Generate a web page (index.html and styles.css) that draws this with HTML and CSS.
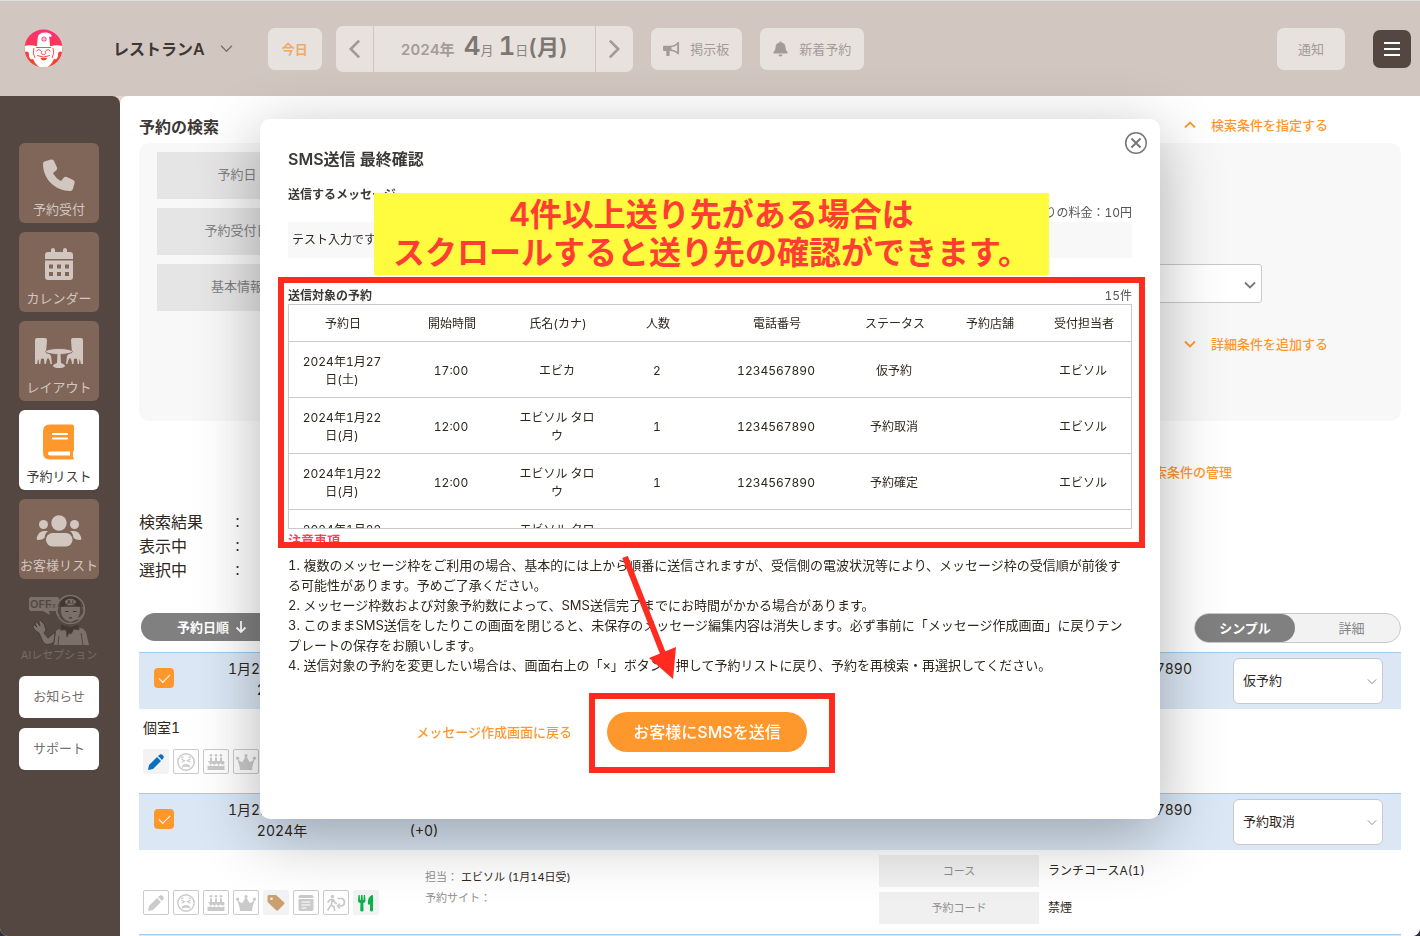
FILE: index.html
```html
<!DOCTYPE html>
<html lang="ja">
<head>
<meta charset="utf-8">
<meta name="viewport" content="width=device-width, initial-scale=1">
<title>予約リスト</title>
<link rel="stylesheet" href="styles.css">
</head>
<body>
<svg class="sprite" aria-hidden="true">
  <symbol id="chev" viewBox="0 0 12 8"><path d="M1 1.5l5 5 5-5" fill="none" stroke="currentColor" stroke-width="1.8"/></symbol>
  <symbol id="chev-thin" viewBox="0 0 12 8"><path d="M1 1.5l5 5 5-5" fill="none" stroke="currentColor" stroke-width="1.2"/></symbol>
  <symbol id="pencil" viewBox="0 0 18 18"><path d="M1 17l1-5L10 4l4 4-8 8zM11 3l2-1.500c1.600-1.300 4.700 1.600 3.500 3.400L15 7z" fill="currentColor"/></symbol>
  <symbol id="face" viewBox="0 0 18 18"><g fill="none" stroke="currentColor" stroke-width="1.400"><circle cx="9" cy="9" r="8.200"/><path d="M4.500 6l3 1.700-3 1.500M13.500 6l-3 1.700 3 1.500M5.500 13.800c.7-3 6.300-3 7 0l-1.700-.7H7.200zM4 4.800l2.500-1M14 4.800l-2.500-1" stroke-width="1.200"/></g></symbol>
  <symbol id="cake" viewBox="0 0 18 18"><path d="M3 4.500h2V8h3V4.500h2V8h3V4.500h2V8h1c1 0 1.500.7 1.500 1.500v1c-1.300 1.500-2.600 1.500-3.900 0-1.400 1.500-2.800 1.500-4.100 0-1.400 1.500-2.800 1.500-4.100 0-1 1.300-2 1.500-2.900.5V9.500C.5 8.500 1 8 2 8h1zM.500 12.500c1 .7 2 .5 2.900-.3 1.300 1.200 2.700 1.200 4.100 0 1.300 1.200 2.700 1.200 4.100 0 1.500 1.300 3.500 1.400 5.900 0V17H.500z" fill="currentColor"/><circle cx="4" cy="2.200" r="1.300" fill="currentColor"/><circle cx="9" cy="2.200" r="1.300" fill="currentColor"/><circle cx="14" cy="2.200" r="1.300" fill="currentColor"/></symbol>
  <symbol id="crown" viewBox="0 0 20 18"><path d="M3.800 14.500L1.300 5.500q3 3.500 5.200 3.500L10 2.500 13.500 9q2.200 0 5.200-3.500l-2.500 9v2.500H3.800z" fill="currentColor"/><circle cx="10" cy="2.600" r="1.600" fill="currentColor"/><circle cx="1.600" cy="5.200" r="1.600" fill="currentColor"/><circle cx="18.400" cy="5.200" r="1.600" fill="currentColor"/></symbol>
  <symbol id="tag" viewBox="0 0 18 18"><path d="M.5 2.500Q.5 1 2 1h7l8 7.300q1 1 0 2l-5.800 6q-1 .9-2 0L.5 8z" fill="currentColor"/><circle cx="4.500" cy="4.800" r="1.300" fill="#f3f3f3"/></symbol>
  <symbol id="note" viewBox="0 0 18 18"><rect x="1.500" y="1" width="15" height="16" rx="2" fill="currentColor"/><path d="M1 4.500h16M4.500 8h9M4.500 11h9M4.500 14h5" stroke="#fff" stroke-width="1.200"/></symbol>
  <symbol id="leave" viewBox="0 0 20 18"><circle cx="6.500" cy="2.500" r="1.700" fill="currentColor"/><path d="M1.500 8.500L4.500 5.500l3 .3 1.500 3 2 .8M6.500 6l-1.300 5 3 2 .4 4M4.700 11.500L1.500 16.500M11.500 4.500h4.500c3.500 1.500 3.300 7-1 7.500h-3M14 9.500L11.500 12l2.500 2.500" fill="none" stroke="currentColor" stroke-width="1.700"/></symbol>
  <symbol id="meal" viewBox="0 0 18 18"><path d="M1.500 1h1.200l.4 5h.6L4 1h1.500l.3 5h.6L6.800 1H8l.5 5.500c0 1.500-1 2.300-2.200 2.600L6.600 16q0 1.500-1.700 1.500T3.200 16l.3-6.900C2 8.700 1 7.800 1 6.500zM16 1v15q0 1.500-1.500 1.500T13 16v-5.500h-2C10.500 5.500 12 1.500 16 1z" fill="currentColor"/></symbol>
</svg>

<div class="app">
  <header class="topbar">
    <svg class="logo" viewBox="0 0 39 39" role="img" aria-label="ロゴ">
      <defs><linearGradient id="lg" x1="0" y1="0" x2="0" y2="1"><stop offset="0" stop-color="#ff2d78"/><stop offset="1" stop-color="#f04a22"/></linearGradient><clipPath id="lc"><circle cx="19.500" cy="19.500" r="19"/></clipPath></defs>
      <g clip-path="url(#lc)">
        <rect width="39" height="39" fill="url(#lg)"/>
        <path d="M13 17l.8-9Q15 3.500 21 3.500c5 0 8 2.500 6 4.500l-1.800-.5.8 9.500z" fill="#fff"/>
        <path d="M0 17q6-1.500 12 0h15q6-1.500 12 0l-1 6q-4-2-4 3t-4 4q-4 9-10.500 9T9 30q-4 1-4-4T1 23z" fill="#fff"/>
        <circle cx="20" cy="10" r="2.600" fill="#f45b86"/><path d="M18 10h4M20 8v4" stroke="#fff" stroke-width=".7"/>
        <path d="M12.500 22q2-2.500 4.500-.5M22 21.500q2.500-2 4.500.5M12 18.500h15M18 22q-2 3.500 1.500 3.500T21 22M13 26.500q6.500 3 13 0M10 19q-2 5 1 10M29 19q2 5-1 10" fill="none" stroke="#f23d35" stroke-width=".9"/>
        <path d="M16.500 28.800h6.500q-.5 2.700-3.200 2.700t-3.300-2.700z" fill="#f0482b"/>
      </g>
    </svg>
    <button class="shop" type="button">レストランA<svg class="shop-chev"><use href="#chev-thin"/></svg></button>
    <button class="hbtn today" type="button">今日</button>
    <div class="datenav">
      <button class="step" type="button" aria-label="前の日"><svg viewBox="0 0 14 22"><path d="M12 2L3 11l9 9" fill="none" stroke="currentColor" stroke-width="2.800"/></svg></button>
      <button class="date" type="button"><span class="year">2024年</span><span class="big">4</span><span class="unit">月</span><span class="big day">1</span><span class="unit">日</span><span class="wday">(月)</span></button>
      <button class="step" type="button" aria-label="次の日"><svg viewBox="0 0 14 22"><path d="M2 2l9 9-9 9" fill="none" stroke="currentColor" stroke-width="2.800"/></svg></button>
    </div>
    <button class="hbtn board" type="button"><svg viewBox="0 0 18 16"><path d="M1 4.500h6.500C11 4.500 14 3 15.500.5H17v13h-1.500C14 11.500 11 10 7.500 10H7v4.500q0 1-1 1H4.500q-1 0-1-1V10H1q-1 0-1-1V5.500q0-1 1-1z" fill="currentColor"/><path d="M9 6q3.500 0 6-2.500v7.500Q12.500 8.700 9 8.500z" fill="#e8e2de"/></svg>掲示板</button>
    <button class="hbtn fresh" type="button"><svg viewBox="0 0 16 16"><path d="M7 1.500V.5h2v1c3 .5 4 2.500 4 5q0 3 2 4.500v1.500H1V11q2-1.500 2-4.500c0-2.500 1-4.500 4-5zM6 13.500h4q0 2-2 2t-2-2z" fill="currentColor"/></svg>新着予約</button>
    <button class="hbtn notice" type="button">通知</button>
    <button class="menu" type="button" aria-label="メニュー"><span></span><span></span><span></span></button>
  </header>

  <nav class="side">
    <a class="nav" href="#"><svg viewBox="0 0 36 36"><path d="M3.500 4.500l6.500-2q2-.5 3 1.500l3 6.500q.6 1.700-.8 3L12 16q2.500 5 8 8l2.700-3.300q1.200-1.300 3-.7l6.500 2.900q2 1 1.400 3l-1.800 6.300q-.5 1.800-2.400 1.800C14 34 2 22 2 6.800q0-1.800 1.500-2.300z" fill="currentColor"/></svg>予約受付</a>
    <a class="nav" href="#"><svg viewBox="0 0 36 36"><path d="M4 13V9q0-3 3-3h3V4a2 2 0 014 0V6h8V4a2 2 0 014 0V6h3q3 0 3 3v4zM4 14.500h28V31q0 3-3 3H7q-3 0-3-3z" fill="currentColor"/><path d="M8 20.500h20M8 28h20" stroke="#806658" stroke-width="4" stroke-dasharray="4 4"/></svg>カレンダー</a>
    <a class="nav" href="#"><svg class="wide" viewBox="0 0 48 36"><path id="chair" d="M0 5q0-2 2-2h8q2 0 2 2l-1 13q4 .5 5 3l1 8h-1.500q-.8-5-2.500-6-1.500 1-2 6H9.500L9 24q-2-1-3 0l-.7 5H4l-.5-5q-1 1-1.300 5H0z" fill="currentColor"/><use href="#chair" transform="matrix(-1 0 0 1 48 0)"/><ellipse cx="24" cy="16.500" rx="13.500" ry="3" fill="currentColor" stroke="#806658" stroke-width=".8"/><path d="M22.500 19h3l.5 9q4 1.500 4 3-1 2-6 2t-6-2q0-1.500 4-3z" fill="currentColor"/></svg>レイアウト</a>
    <a class="nav active" href="#"><svg viewBox="0 0 36 36"><path d="M8.500.5H31q2 0 2 2v23.500q0 1-1 2v5q1 .5 1 1.500t-1 1H9q-7 0-7-7v-21q0-7 6.500-7z" fill="currentColor"/><path d="M12 10h14M12 14.500h14" stroke="#fff" stroke-width="2.200" stroke-linecap="round"/><path d="M9 27.500h20V31.500H9q-2 0-2-2t2-2z" fill="#fff"/></svg>予約リスト</a>
    <a class="nav" href="#"><svg class="wide" viewBox="0 0 48 36"><g fill="currentColor"><circle cx="24" cy="10" r="7.700"/><circle cx="8.500" cy="11.500" r="4.500"/><circle cx="39.500" cy="11.500" r="4.500"/><rect x="11" y="20" width="26.500" height="13.500" rx="6.500"/><path d="M13 18q-3 2-3.500 7-2 2-6.500 2-2 0-1-3 2-6 7-6zM35 18q3 2 3.500 7 2 2 6.500 2 2 0 1-3-2-6-7-6z"/></g></svg>お客様リスト</a>
    <a class="nav ai" href="#"><svg viewBox="0 0 64 52"><path d="M4 4h26q2 0 2 2v10q0 2-2 2h-8l1 4-7-4H4q-2 0-2-2V6q0-2 2-2z" fill="#7b706a"/><text x="3" y="15" class="off">OFF</text><text x="21" y="15" class="off small">です</text><circle cx="43.500" cy="16.500" r="14" fill="#544741" stroke="#7b706a" stroke-width="1.400"/><path d="M34 14h19q1 13-9.500 15Q33 27 34 14z" fill="#7b706a"/><path d="M33 14q0-10 10.500-10.500Q54 4 54 14q-10-4-21 0z" fill="#43382f"/><ellipse cx="43.500" cy="9" rx="5.500" ry="3.300" fill="#7b706a"/><text x="40" y="11" class="aitxt">A.I.</text><path d="M31 14q-3 5 1 9M56 14q3 5-1 9-2 3-7 3" fill="none" stroke="#7b706a" stroke-width="1.600"/><path d="M38 18.500h3.500M46 18.500h3.500M42 24.500q1.500 1 3 0" fill="none" stroke="#43382f" stroke-width="1.100"/><path d="M27 52l2-14q3-3 9-4h12q7 1 9 5l3 13z" fill="#7b706a"/><path d="M34 31l9 3 9-3v6l-5-1-3 5-2-1-2 4-1-7-6 0zM54 40l2 12M32 43l-1 9" fill="#43382f" stroke="#544741" stroke-width="1"/><path d="M13 27l4 4 2 6-2 3 4 5 7-6-1 10q-7 5-11 0l-4-9q-7-4-6-8 1-1 4 2-3-4-1-5 1 0 4 4-2-5 0-6z" fill="#7b706a" stroke="#43382f" stroke-width=".8"/></svg>AIレセプション</a>
    <div class="extras">
      <a class="plain" href="#">お知らせ</a>
      <a class="plain" href="#">サポート</a>
    </div>
  </nav>

  <main class="main">
    <div class="search-head"><h1>予約の検索</h1><a class="olink" href="#"><svg class="up"><use href="#chev"/></svg>検索条件を指定する</a></div>
    <section class="panel">
      <div class="cond"><span class="cond-label">予約日</span></div>
      <div class="cond"><span class="cond-label">予約受付日</span></div>
      <div class="cond"><label class="cond-label" for="basic">基本情報</label><span class="pick basic"><select id="basic"><option></option></select><svg><use href="#chev"/></svg></span></div>
      <a class="olink more" href="#"><svg><use href="#chev"/></svg>詳細条件を追加する</a>
    </section>
    <a class="olink manage" href="#">検索条件の管理</a>
    <dl class="counts"><dt>検索結果</dt><dd>：</dd><dt>表示中</dt><dd>：</dd><dt>選択中</dt><dd>：</dd></dl>
    <div class="tools">
      <button class="sort" type="button">予約日順<svg viewBox="0 0 12 14"><path d="M6 1v11M1.500 7.500L6 12l4.500-4.500" fill="none" stroke="currentColor" stroke-width="1.800"/></svg></button>
      <div class="toggle"><button class="on" type="button">シンプル</button><button type="button">詳細</button></div>
    </div>

    <article class="resv">
      <header class="resv-head">
        <input type="checkbox" checked aria-label="予約を選択">
        <div class="when"><span>1月27日(土)</span><span>2024年</span></div>
        <div class="guests"><span>2名</span><span>(+0)</span></div>
        <div class="phone">1234567890</div>
        <span class="pick"><select aria-label="ステータス"><option>仮予約</option></select><svg><use href="#chev-thin"/></svg></span>
      </header>
      <div class="resv-body">
        <div class="seat"><p>個室1</p>
          <div class="marks"><button class="lit blue" type="button" aria-label="メモ"><svg><use href="#pencil"/></svg></button><button type="button" aria-label="注意"><svg><use href="#face"/></svg></button><button type="button" aria-label="記念日"><svg><use href="#cake"/></svg></button><button type="button" aria-label="VIP"><svg class="w20"><use href="#crown"/></svg></button></div>
        </div>
      </div>
    </article>
    <article class="resv">
      <header class="resv-head">
        <input type="checkbox" checked aria-label="予約を選択">
        <div class="when"><span>1月22日(月)</span><span>2024年</span></div>
        <div class="guests"><span>1名</span><span>(+0)</span></div>
        <div class="phone">1234567890</div>
        <span class="pick"><select aria-label="ステータス"><option>予約取消</option></select><svg><use href="#chev-thin"/></svg></span>
      </header>
      <div class="resv-body">
        <div class="seat"><p></p>
          <div class="marks"><button type="button" aria-label="メモ"><svg><use href="#pencil"/></svg></button><button type="button" aria-label="注意"><svg><use href="#face"/></svg></button><button type="button" aria-label="記念日"><svg><use href="#cake"/></svg></button><button type="button" aria-label="VIP"><svg class="w20"><use href="#crown"/></svg></button><button class="lit tan" type="button" aria-label="タグ"><svg><use href="#tag"/></svg></button><button type="button" aria-label="ノート"><svg><use href="#note"/></svg></button><button type="button" aria-label="退店"><svg class="w20"><use href="#leave"/></svg></button><button class="lit green" type="button" aria-label="コース"><svg><use href="#meal"/></svg></button></div>
        </div>
        <div class="staff"><p>担当： <b>エビソル (1月14日受)</b></p><p>予約サイト：</p></div>
        <dl class="facts"><dt>コース</dt><dd>ランチコースA(1)</dd><dt>予約コード</dt><dd>禁煙</dd></dl>
      </div>
    </article>
    <article class="resv"><header class="resv-head"></header></article>
  </main>
</div>

<div class="overlay">
  <div class="modal" role="dialog" aria-labelledby="dlg-title">
    <button class="close" type="button" aria-label="閉じる"><svg viewBox="0 0 24 24"><g fill="none" stroke="currentColor" stroke-width="1.600"><circle cx="12" cy="12" r="10.300"/><path d="M7.500 7.500l9 9M16.500 7.500l-9 9" stroke-width="2"/></g></svg></button>
    <h2 id="dlg-title">SMS送信 最終確認</h2>
    <h3>送信するメッセージ</h3>
    <p class="price">1件あたりの料金：10円</p>
    <p class="message">テスト入力です</p>
    <div class="targets-head"><h3>送信対象の予約</h3><span>15件</span></div>
    <div class="scroll">
      <table>
        <colgroup><col class="c-date"><col class="c-time"><col class="c-name"><col class="c-num"><col class="c-tel"><col class="c-stat"><col class="c-shop"><col class="c-staff"></colgroup>
        <thead><tr><th>予約日</th><th>開始時間</th><th>氏名(カナ)</th><th>人数</th><th>電話番号</th><th>ステータス</th><th>予約店舗</th><th>受付担当者</th></tr></thead>
        <tbody>
          <tr><td>2024年1月27日(土)</td><td>17:00</td><td>エビカ</td><td>2</td><td>1234567890</td><td>仮予約</td><td></td><td>エビソル</td></tr>
          <tr><td>2024年1月22日(月)</td><td>12:00</td><td>エビソル タロウ</td><td>1</td><td>1234567890</td><td>予約取消</td><td></td><td>エビソル</td></tr>
          <tr><td>2024年1月22日(月)</td><td>12:00</td><td>エビソル タロウ</td><td>1</td><td>1234567890</td><td>予約確定</td><td></td><td>エビソル</td></tr>
          <tr><td>2024年1月22日(月)</td><td></td><td>エビソル タロウ</td><td></td><td></td><td></td><td></td><td></td></tr>
        </tbody>
      </table>
    </div>
    <h4>注意事項</h4>
    <div class="notes">
      <p>1. 複数のメッセージ枠をご利用の場合、基本的には上から順番に送信されますが、受信側の電波状況等により、メッセージ枠の受信順が前後する可能性があります。予めご了承ください。</p>
      <p>2. メッセージ枠数および対象予約数によって、SMS送信完了までにお時間がかかる場合があります。</p>
      <p>3. このままSMS送信をしたりこの画面を閉じると、未保存のメッセージ編集内容は消失します。必ず事前に「メッセージ作成画面」に戻りテンプレートの保存をお願いします。</p>
      <p>4. 送信対象の予約を変更したい場合は、画面右上の「×」ボタンを押して予約リストに戻り、予約を再検索・再選択してください。</p>
    </div>
    <div class="actions"><a class="olink" href="#">メッセージ作成画面に戻る</a><button class="send" type="button">お客様にSMSを送信</button></div>

    <div class="callout">4件以上送り先がある場合は<br>スクロールすると送り先の確認ができます。</div>
    <div class="frame frame-table"></div>
    <div class="frame frame-send"></div>
    <svg class="arrow" viewBox="0 0 56 124"><path d="M4 1l39 99" stroke="#ff2a20" stroke-width="6"/><path d="M28 102l27-11-3 32z" fill="#ff2a20"/></svg>
  </div>
</div>
</body>
</html>
```

FILE: styles.css
```css
* { box-sizing: border-box; margin: 0; padding: 0; }
html { background: #27303c; }
body {
  font-family: Inter, "Noto Sans CJK JP", "Liberation Sans", sans-serif;
  font-size: 13px;
  font-variant-numeric: tabular-nums;
  line-height: 20px;
  color: #2f271c;
}
button, select, input { font: inherit; font-variant-numeric: inherit; color: inherit; border: 0; background: none; }
a { color: inherit; text-decoration: none; }
.sprite { position: absolute; width: 0; height: 0; }

.app {
  display: grid;
  grid-template: 96px minmax(0, 1fr) / 120px minmax(0, 1fr);
  height: 100vh;
  overflow: hidden;
  background: #e4d6ce;
  border-radius: 0 0 8px 8px;
}

/* Top bar */
.topbar {
  grid-column: 1 / -1;
  display: flex;
  align-items: center;
  padding: 0 9px 0 24px;
  background: #d2c6c0;
  border-top: 1px solid #dcdfe2;
}
.logo { width: 39px; height: 39px; margin-right: 50px; }
.shop { display: flex; align-items: center; gap: 15px; margin-right: 35px; font-size: 16px; font-weight: 600; color: #3c3836; }
.shop-chev { width: 13px; height: 9px; color: #77706c; }
.hbtn {
  display: flex;
  align-items: center;
  justify-content: center;
  height: 42px;
  border-radius: 7px;
  background: #e8e2de;
  color: #a39b96;
}
.hbtn svg { width: 17px; height: 16px; margin-right: 10px; }
.today { width: 54px; color: #eeaa66; font-weight: 600; }
.datenav { display: flex; width: 297px; height: 46px; margin: 0 18px 0 14px; background: #e8e2de; border-radius: 7px; color: #a19a95; }
.step { display: grid; place-items: center; width: 37px; }
.step svg { width: 13px; height: 22px; }
.date { flex: 1; display: flex; align-items: baseline; justify-content: center; border: solid #cfc5bf; border-width: 0 1px; line-height: 40px; color: #8b8480; }
.year { margin-right: 9px; font-size: 15px; font-weight: 600; color: #a39c97; }
.big { font-size: 26px; font-weight: 600; color: #7d7672; }
.day { margin-left: 5px; }
.unit { font-size: 13px; }
.wday { font-size: 22px; font-weight: 600; color: #7d7672; }
.board { width: 91px; margin-right: 18px; }
.fresh { width: 104px; }
.notice { width: 68px; margin-left: auto; }
.menu { display: flex; flex-direction: column; justify-content: center; align-items: center; gap: 4px; width: 38px; height: 38px; margin-left: 28px; border-radius: 7px; background: #544741; }
.menu span { width: 16px; height: 2px; background: #fff; }

/* Side navigation */
.side { display: flex; flex-direction: column; align-items: center; gap: 9px; padding: 47px 2px 0 0; background: #544741; border-radius: 0 8px 0 0; }
.nav { display: flex; flex-direction: column; align-items: center; justify-content: flex-end; gap: 6px; width: 80px; height: 80px; padding-bottom: 4px; border-radius: 6px; background: #806658; color: #d2c6c0; white-space: nowrap; }
.nav svg { width: 36px; height: 36px; }
.nav svg.wide { width: 48px; }
.nav.active { background: #fff; color: #3c3836; }
.nav.active svg { color: #ff982c; }
.nav.ai { height: 79px; padding-bottom: 2px; gap: 0; background: none; color: #776b65; font-size: 11px; }
.nav.ai svg { width: 64px; height: 52px; }
.off { font-size: 11px; font-weight: 600; fill: #544741; }
.off.small { font-size: 4px; }
.aitxt { font-size: 5px; font-weight: 700; fill: #43382f; }
.extras { display: grid; gap: 10px; }
.plain { display: grid; place-items: center; width: 80px; height: 42px; padding-bottom: 2px; border-radius: 6px; background: #fff; color: #77716e; }

/* Main column */
.main { padding: 19px 19px 0; overflow: hidden; background: #fff; border-radius: 8px 0 0 0; }
.search-head { display: flex; justify-content: space-between; align-items: flex-start; height: 24px; margin-bottom: 4px; padding-right: 73px; }
h1 { font-size: 16px; font-weight: 600; line-height: 24px; color: #3c3836; }
.olink { color: #ff982c; font-weight: 500; }
.search-head .olink, .more { display: flex; align-items: center; justify-content: flex-end; gap: 15px; }
.olink svg { width: 12px; height: 8px; }
.olink .up { transform: rotate(180deg); }
.panel { display: grid; gap: 9px; padding: 9px 0 67px 18px; background: #f8f8f8; border-radius: 10px; }
.cond { display: flex; height: 47px; }
.cond-label { width: 160px; line-height: 44px; background: #e5e5e5; text-align: center; color: #808080; }
.pick { position: relative; display: block; width: 150px; height: 46px; }
.pick select { width: 100%; height: 100%; padding: 0 9px 2px; appearance: none; border: 1px solid #c9c9c9; border-radius: 6px; background: #fff; }
.pick svg { position: absolute; right: 6px; top: 50%; width: 10px; height: 7px; margin-top: -3px; color: #8d8d8d; }
.basic { flex: 1; height: 39px; margin: 0 139px 0 14px; }
.basic select { border-radius: 3px; }
.basic svg { width: 12px; height: 8px; color: #777; }
.more { margin-top: 14px; padding-right: 73px; }
.manage { display: block; margin: 41px 0 28px; padding-right: 169px; text-align: right; }
.counts { display: grid; grid-template-columns: 92px 1fr; margin-bottom: 31px; font-size: 16px; line-height: 24px; }
.counts dd { font-size: 13px; }
.tools { display: flex; justify-content: space-between; height: 30px; margin-bottom: 9px; padding-left: 2px; }
.sort { display: flex; align-items: center; justify-content: center; gap: 6px; width: 142px; height: 28px; border-radius: 14px; background: #808080; color: #fff; font-weight: 600; }
.sort svg { width: 12px; height: 14px; }
.toggle { display: flex; width: 207px; padding: 0; border: 1px solid #c9c9c9; border-radius: 15px; background: #f2f2f2; color: #858585; }
.toggle button { flex: 1; border-radius: 14px; padding-left: 8px; }
.toggle .on { flex: 0 0 100px; padding-left: 0; background: #808080; color: #fff; font-weight: 600; }

/* Reservation rows */
.resv-head { display: grid; grid-template-columns: 89px 108px 176px 1fr 150px; height: 57px; padding: 5px 18px 0 0; border-top: 1px solid #9ecbf0; background: #dbe7f5; font-size: 14px; line-height: 21px; }
.resv-head input { position: relative; width: 20px; height: 20px; margin: 10px 0 0 15px; appearance: none; border-radius: 4px; background: #ff982c; }
.resv-head input::after { content: ""; position: absolute; left: 5px; top: 6px; width: 10px; height: 5px; border: solid #fff; border-width: 0 0 1px 1px; transform: rotate(-45deg); }
.when span, .guests span { display: block; white-space: nowrap; }
.when span + span { text-align: center; }
.guests { text-align: center; }
.phone { padding-right: 41px; text-align: right; }
.resv-head .pick { font-size: 13px; }
.resv-body { display: grid; grid-template-columns: 286px 454px 1fr; height: 84px; }
.seat { padding: 9px 0 0 4px; }
.seat p { height: 20px; margin-bottom: 11px; font-size: 14px; }
.marks { display: flex; gap: 4px; }
.marks button { display: grid; place-items: center; width: 26px; height: 25px; border: 1px solid #cacaca; border-radius: 2px; color: #cacaca; }
.marks svg { width: 18px; height: 18px; }
.marks svg.w20 { width: 20px; }
.marks .lit { border-color: #f3f3f3; background: #f3f3f3; }
.marks .blue { color: #0b6fc0; }
.marks .tan { color: #cc9f70; }
.marks .green { color: #0db14b; }
.staff { padding-top: 17px; font-size: 11px; line-height: 21px; color: #8f8f8f; }
.staff b { font-weight: 400; color: #2f271c; }
.facts { display: grid; grid-template-columns: 160px 1fr; grid-auto-rows: 32px; gap: 5px 9px; padding-top: 5px; font-size: 12px; line-height: 32px; }
.facts dt { background: #f0f0f0; color: #8f8f8f; font-size: 11px; text-align: center; }

/* Confirmation dialog */
.overlay { position: fixed; inset: 0; display: flex; justify-content: center; align-items: flex-start; padding-top: 119px; overflow: hidden; }
.modal { position: relative; width: 900px; min-height: 700px; padding: 28px; border-radius: 10px; background: #fff; box-shadow: 0 16px 64px rgba(0, 0, 0, 0.3); font-size: 12px; line-height: 18px; }
.close { position: absolute; top: 12px; right: 12px; width: 24px; height: 24px; color: #777; }
h2 { margin-bottom: 15px; font-size: 16px; font-weight: 600; line-height: 24px; color: #3c3836; }
h3 { font-size: 12px; font-weight: 700; color: #3c3836; }
.price { text-align: right; color: #555; }
.message { height: 36px; margin-bottom: 29px; padding: 0 4px; background: #f8f8f8; line-height: 36px; }
.targets-head { display: flex; justify-content: space-between; height: 17px; color: #555; }
.scroll { height: 225px; overflow-y: auto; scrollbar-width: none; border: 1px solid #c9c9c9; }
table { width: 100%; table-layout: fixed; border-collapse: collapse; text-align: center; }
th { height: 36px; padding: 2px 0 0; border-bottom: 1px solid #c9c9c9; font-weight: 400; }
td { height: 56px; padding: 3px 14px 0 12px; border-bottom: 1px solid #c9c9c9; }
.c-date { width: 108px; }
.c-time { width: 110px; }
.c-name { width: 102px; }
.c-num { width: 98px; }
.c-tel { width: 140px; }
.c-stat { width: 96px; }
.c-shop { width: 94px; }
.c-staff { width: 94px; }
h4 { margin: 1px 0 5px; font-size: 13px; font-weight: 700; line-height: 20px; color: #ff4255; }
.notes { padding-right: 8px; font-size: 13px; line-height: 20px; }
.actions { display: grid; grid-template-columns: 1fr 200px 1fr; align-items: center; margin-top: 37px; padding-right: 6px; }
.actions .olink { padding-right: 35px; font-size: 13px; text-align: right; }
.send { height: 40px; border-radius: 20px; background: #ff982c; color: #fff; font-size: 16px; font-weight: 500; }

/* Annotations laid over the dialog */
.callout { position: absolute; left: 114px; top: 74px; width: 675px; height: 82px; padding-top: 3px; background: #fffb3f; color: #ff3d34; font-size: 32px; font-weight: 600; line-height: 38px; text-align: center; white-space: nowrap; }
.frame { position: absolute; border: 6px solid #ff2a20; }
.frame-table { left: 18px; top: 158px; width: 867px; height: 271px; }
.frame-send { left: 329px; top: 574px; width: 246px; height: 80px; }
.arrow { position: absolute; left: 361px; top: 437px; width: 56px; height: 124px; }
```
